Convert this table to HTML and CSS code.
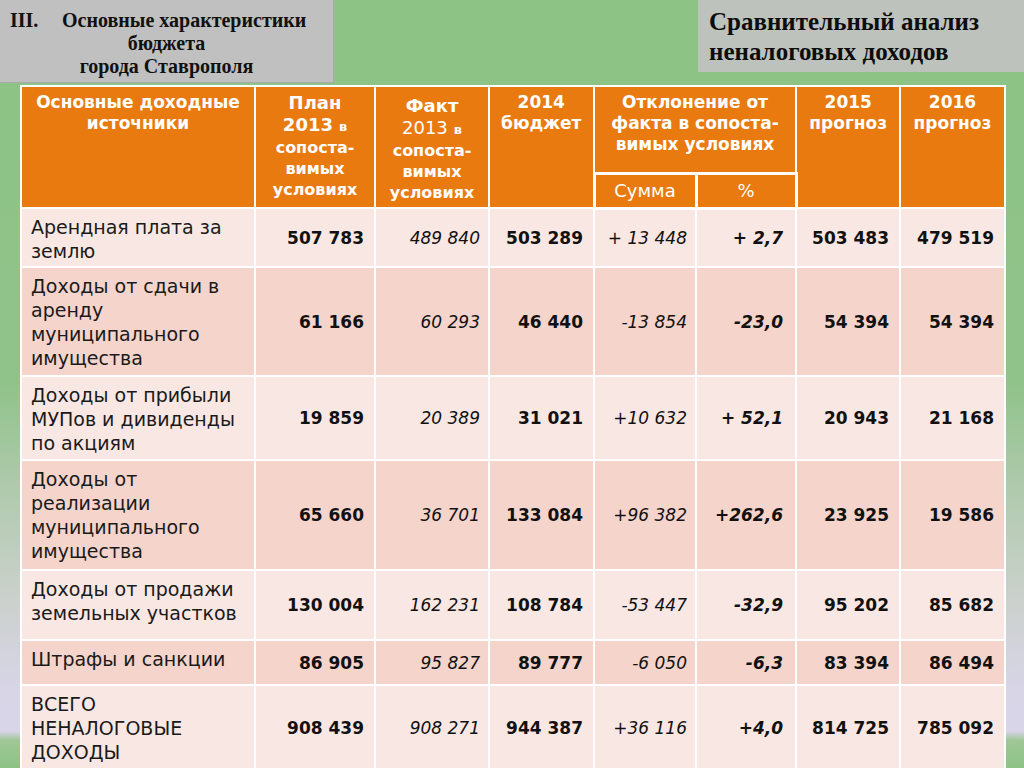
FILE: index.html
```html
<!DOCTYPE html>
<html lang="ru">
<head>
<meta charset="utf-8">
<title>Сравнительный анализ неналоговых доходов</title>
<link rel="stylesheet" href="styles.css">
</head>
<body>
<div class="slide">
  <div class="top">
    <div class="section-box">
      <div class="sec-line first"><span class="roman">III.</span><span>Основные характеристики</span></div>
      <div class="sec-line">бюджета</div>
      <div class="sec-line">города Ставрополя</div>
    </div>
    <div class="title-box">Сравнительный анализ<br>неналоговых доходов</div>
  </div>
  <table class="data">
    <colgroup>
      <col class="c1"><col class="c2"><col class="c3"><col class="c4"><col class="c5"><col class="c6"><col class="c7"><col class="c8">
    </colgroup>
    <thead>
      <tr class="hrow-a">
        <th rowspan="2" class="h-src">Основные доходные<br>источники</th>
        <th rowspan="2" class="h-plan"><span class="big">План</span><br><span class="big">2013</span> <span class="tiny">в</span><br><span class="sm">сопоста-<br>вимых<br>условиях</span></th>
        <th rowspan="2" class="h-fact"><span class="big">Факт</span><br><span class="big reg">2013</span> <span class="tiny">в</span><br><span class="sm">сопоста-<br>вимых<br>условиях</span></th>
        <th rowspan="2">2014<br>бюджет</th>
        <th colspan="2">Отклонение от<br>факта в сопоста-<br>вимых условиях</th>
        <th rowspan="2">2015<br>прогноз</th>
        <th rowspan="2">2016<br>прогноз</th>
      </tr>
      <tr class="hrow-b">
        <th class="sub">Сумма</th>
        <th class="sub">%</th>
      </tr>
    </thead>
    <tbody>
      <tr class="r1 light">
        <td class="lbl">Арендная плата за<br>землю</td>
        <td class="b">507 783</td><td class="i">489 840</td><td class="b">503 289</td><td class="i">+ 13 448</td><td class="bi">+ 2,7</td><td class="b">503 483</td><td class="b">479 519</td>
      </tr>
      <tr class="r2 dark">
        <td class="lbl">Доходы от сдачи в<br>аренду<br>муниципального<br>имущества</td>
        <td class="b">61 166</td><td class="i">60 293</td><td class="b">46 440</td><td class="i">-13 854</td><td class="bi">-23,0</td><td class="b">54 394</td><td class="b">54 394</td>
      </tr>
      <tr class="r3 light">
        <td class="lbl">Доходы от прибыли<br>МУПов и дивиденды<br>по акциям</td>
        <td class="b">19 859</td><td class="i">20 389</td><td class="b">31 021</td><td class="i">+10 632</td><td class="bi">+ 52,1</td><td class="b">20 943</td><td class="b">21 168</td>
      </tr>
      <tr class="r4 dark">
        <td class="lbl">Доходы от<br>реализации<br>муниципального<br>имущества</td>
        <td class="b">65 660</td><td class="i">36 701</td><td class="b">133 084</td><td class="i">+96 382</td><td class="bi">+262,6</td><td class="b">23 925</td><td class="b">19 586</td>
      </tr>
      <tr class="r5 light">
        <td class="lbl">Доходы от продажи<br>земельных участков</td>
        <td class="b">130 004</td><td class="i">162 231</td><td class="b">108 784</td><td class="i">-53 447</td><td class="bi">-32,9</td><td class="b">95 202</td><td class="b">85 682</td>
      </tr>
      <tr class="r6 dark">
        <td class="lbl">Штрафы и санкции</td>
        <td class="b">86 905</td><td class="i">95 827</td><td class="b">89 777</td><td class="i">-6 050</td><td class="bi">-6,3</td><td class="b">83 394</td><td class="b">86 494</td>
      </tr>
      <tr class="r7 light">
        <td class="lbl">ВСЕГО<br>НЕНАЛОГОВЫЕ<br>ДОХОДЫ</td>
        <td class="b">908 439</td><td class="i">908 271</td><td class="b">944 387</td><td class="i">+36 116</td><td class="bi">+4,0</td><td class="b">814 725</td><td class="b">785 092</td>
      </tr>
    </tbody>
  </table>
</div>
</body>
</html>
```

FILE: styles.css
```css
html, body {
  margin: 0;
  padding: 0;
  width: 1024px;
  height: 768px;
  overflow: hidden;
}
body {
  background: linear-gradient(to bottom,
    #8dc385 0%,
    #90c38a 50%,
    #b4cbb2 66%,
    #cbd1cc 78%,
    #d8d5e7 90%,
    #d9d5e9 95.2%,
    #9fc796 96.4%,
    #8dc385 100%);
  font-family: "DejaVu Sans", Verdana, sans-serif;
}
.slide {
  position: relative;
  width: 1024px;
  height: 768px;
}
.top {
  display: flex;
  justify-content: space-between;
  align-items: flex-start;
  height: 85px;
}
.section-box {
  width: 334px;
  height: 83px;
  box-sizing: border-box;
  background: #c0c0c0;
  border-right: 1px solid #a9a9a9;
  border-bottom: 1px solid #a9a9a9;
  font-family: "Liberation Serif", "Times New Roman", serif;
  font-weight: bold;
  font-size: 20px;
  line-height: 23px;
  color: #111;
  padding-top: 9px;
  text-align: center;
}
.sec-line.first {
  display: flex;
  text-align: left;
  padding-left: 10px;
}
.sec-line.first .roman {
  width: 52px;
}
.title-box {
  width: 326px;
  height: 72px;
  box-sizing: border-box;
  background: #bec2bc;
  font-family: "Liberation Serif", "Times New Roman", serif;
  font-weight: bold;
  font-size: 25px;
  line-height: 30px;
  color: #0d0d0d;
  padding: 7px 0 0 11px;
}
table.data {
  margin-left: 20px;
  width: 984px;
  border-collapse: collapse;
  table-layout: fixed;
  border: 1px solid #fff;
}
col.c1 { width: 234px; }
col.c2 { width: 120px; }
col.c3 { width: 114px; }
col.c4 { width: 105px; }
col.c5 { width: 102px; }
col.c6 { width: 100px; }
col.c7 { width: 104px; }
col.c8 { width: 105px; }

th {
  background: #e97a10;
  color: #fff;
  font-weight: bold;
  font-size: 17px;
  line-height: 21px;
  vertical-align: top;
  text-align: center;
  border: 2px solid #fff;
  padding: 5px 0 0;
}
.hrow-a { height: 87px; }
.hrow-b { height: 35px; }
th.sub {
  border: 3px solid #fff;
  font-weight: normal;
  font-size: 18px;
  vertical-align: middle;
  padding: 0;
}
th .big { font-size: 18px; }
th .reg { font-weight: normal; }
th .tiny { font-size: 13px; }
th .sm { font-size: 16px; }
th.h-fact { padding-top: 8px; }

td {
  border: 2px solid #fff;
  font-size: 17px;
  color: #111;
  text-align: right;
  vertical-align: middle;
  padding: 0 10px 0 4px;
  white-space: nowrap;
}
tr.light td { background: #f9e7e3; }
tr.dark td { background: #f5d4cb; }
td.lbl {
  text-align: left;
  vertical-align: top;
  font-size: 19px;
  line-height: 24px;
  padding: 6px 4px 0 9px;
  color: #1a1a1a;
}
td.b { font-weight: bold; }
td.i { font-style: italic; padding-right: 8px; }
td.bi { font-weight: bold; font-style: italic; padding-right: 12px; }
tr.r1 { height: 59px; }
tr.r2 { height: 109px; }
tr.r3 { height: 84px; }
tr.r4 { height: 110px; }
tr.r5 { height: 70px; }
tr.r6 { height: 45px; }
tr.r7 { height: 86px; }
```
